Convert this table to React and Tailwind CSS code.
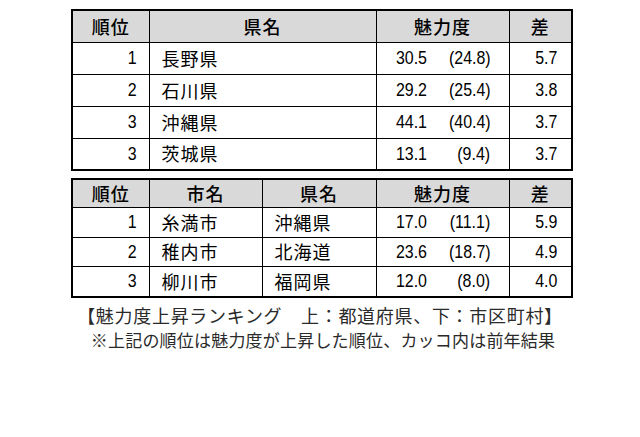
import React from 'react';

const jp = { fontFamily: '"Noto Sans CJK JP", "Noto Sans", sans-serif' };
const num = { fontFamily: '"Liberation Sans", Arial, sans-serif' };

const prefRows = [
  { rank: 1, name: '長野県', score: '30.5', prev: '(24.8)', diff: '5.7' },
  { rank: 2, name: '石川県', score: '29.2', prev: '(25.4)', diff: '3.8' },
  { rank: 3, name: '沖縄県', score: '44.1', prev: '(40.4)', diff: '3.7' },
  { rank: 3, name: '茨城県', score: '13.1', prev: '(9.4)', diff: '3.7' },
];

const cityRows = [
  { rank: 1, city: '糸満市', pref: '沖縄県', score: '17.0', prev: '(11.1)', diff: '5.9' },
  { rank: 2, city: '稚内市', pref: '北海道', score: '23.6', prev: '(18.7)', diff: '4.9' },
  { rank: 3, city: '柳川市', pref: '福岡県', score: '12.0', prev: '(8.0)', diff: '4.0' },
];

const th = 'border border-black bg-[#d9d9d9] text-center font-medium text-[18px] tracking-[1px] p-0';
const td = 'border border-black p-0';

// narrow digits like the original spreadsheet font
const N = ({ children }) => (
  <span className="inline-block origin-right scale-x-[0.84] text-[19px]" style={num}>
    {children}
  </span>
);

const Score = ({ score, prev }) => (
  <div className="flex items-center">
    <span className="w-[50px] text-right"><N>{score}</N></span>
    <span className="flex-1 text-right pr-[18px]"><N>{prev}</N></span>
  </div>
);

const App = () => {
  return (
    <div className="w-[640px] h-[437px] bg-white text-black overflow-hidden" style={jp}>
      <div className="w-[500px] ml-[71px] pt-[9px]">
        <table className="w-[500px] table-fixed border-collapse border-2 border-black">
          <colgroup>
            <col className="w-[77px]" />
            <col className="w-[227px]" />
            <col className="w-[133px]" />
            <col className="w-[63px]" />
          </colgroup>
          <thead>
            <tr className="h-[32px]">
              <th className={th}>順位</th>
              <th className={th}>県名</th>
              <th className={th}>魅力度</th>
              <th className={th}>差</th>
            </tr>
          </thead>
          <tbody>
            {prefRows.map((r) => (
              <tr key={r.name} className="h-[32px]">
                <td className={`${td} text-right pr-[12px]`}><N>{r.rank}</N></td>
                <td className={`${td} pl-[12px] text-[18px] tracking-[1px]`}>{r.name}</td>
                <td className={td}><Score score={r.score} prev={r.prev} /></td>
                <td className={`${td} text-right pr-[14px]`}><N>{r.diff}</N></td>
              </tr>
            ))}
          </tbody>
        </table>

        <table className="w-[500px] mt-[7px] table-fixed border-collapse border-2 border-black">
          <colgroup>
            <col className="w-[77px]" />
            <col className="w-[113px]" />
            <col className="w-[114px]" />
            <col className="w-[133px]" />
            <col className="w-[63px]" />
          </colgroup>
          <thead>
            <tr className="h-[28px]">
              <th className={th}>順位</th>
              <th className={th}>市名</th>
              <th className={th}>県名</th>
              <th className={th}>魅力度</th>
              <th className={th}>差</th>
            </tr>
          </thead>
          <tbody>
            {cityRows.map((r) => (
              <tr key={r.city} className="h-[29px]">
                <td className={`${td} text-right pr-[12px]`}><N>{r.rank}</N></td>
                <td className={`${td} pl-[12px] text-[18px] tracking-[1px]`}>{r.city}</td>
                <td className={`${td} pl-[12px] text-[18px] tracking-[1px]`}>{r.pref}</td>
                <td className={td}><Score score={r.score} prev={r.prev} /></td>
                <td className={`${td} text-right pr-[14px]`}><N>{r.diff}</N></td>
              </tr>
            ))}
          </tbody>
        </table>
      </div>

      <div className="text-[#2a2a2a] flex flex-col items-center">
        <p className="mt-[5px] text-[18px] tracking-[0.7px] leading-[24px]">
          【魅力度上昇ランキング　上：都道府県、下：市区町村】
        </p>
        <p className="mt-[1px] text-[17px] tracking-[0.2px] leading-[24px] pl-[6px]">
          ※上記の順位は魅力度が上昇した順位、カッコ内は前年結果
        </p>
      </div>
    </div>
  );
};

export default App;
